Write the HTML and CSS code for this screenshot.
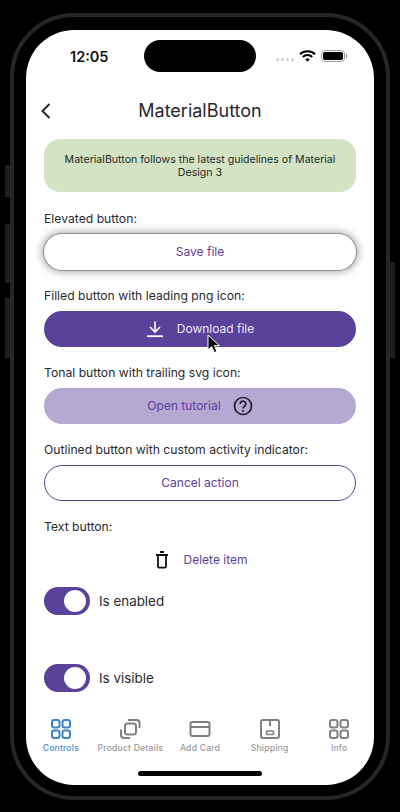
FILE: index.html
```html
<!DOCTYPE html>
<html lang="en">
<head>
    <meta charset="UTF-8">
    <meta name="viewport" content="width=device-width, initial-scale=1.0">
    <title>MaterialButton</title>
    <link rel="stylesheet" href="styles.css">
</head>
<body>
    <div class="phone">
        <span class="side-btn side-mute"></span>
        <span class="side-btn side-up"></span>
        <span class="side-btn side-down"></span>
        <span class="side-btn side-power"></span>
        <div class="screen">
            <div class="status">
                <span class="time">12:05</span>
                <span class="island"></span>
                <div class="status-icons">
                    <span class="signal"><i></i><i></i><i></i><i></i></span>
                    <svg class="wifi" width="17" height="12" viewBox="0 0 17 12">
                        <path d="M1 4.2a10.8 10.8 0 0 1 15 0" fill="none" stroke="#000" stroke-width="2"/>
                        <path d="M3.8 7a6.8 6.8 0 0 1 9.4 0" fill="none" stroke="#000" stroke-width="2"/>
                        <path d="M6.3 9.4a3.2 3.2 0 0 1 4.4 0L8.5 11.8z" fill="#000"/>
                    </svg>
                    <span class="battery"><span class="battery-fill"></span></span>
                </div>
            </div>
            <div class="nav">
                <svg class="back" width="12" height="18" viewBox="0 0 12 18">
                    <path d="M9.5 2 L2.5 9 L9.5 16" fill="none" stroke="#2a2a2e" stroke-width="2"/>
                </svg>
                <h1>MaterialButton</h1>
            </div>
            <div class="content">
                <p class="banner">MaterialButton follows the latest guidelines of Material Design 3</p>

                <p class="label">Elevated button:</p>
                <button class="btn btn-elevated">Save file</button>

                <p class="label">Filled button with leading png icon:</p>
                <button class="btn btn-filled">
                    <svg class="btn-icon" width="18" height="18" viewBox="0 0 18 18">
                        <path d="M9 1.5V11.5M4 7l5 5 5-5" fill="none" stroke="#fff" stroke-width="1.6"/>
                        <path d="M1 16.2h16" stroke="#fff" stroke-width="1.8"/>
                    </svg>
                    Download file
                    <svg class="cursor" width="14" height="20" viewBox="0 0 14 20">
                        <path d="M1 1V16L4.6 12.6L7.4 18.6L10 17.4L7.3 11.6H12.4Z" fill="#000" stroke="#fff" stroke-width="1"/>
                    </svg>
                </button>

                <p class="label">Tonal button with trailing svg icon:</p>
                <button class="btn btn-tonal">
                    Open tutorial
                    <svg class="btn-icon-end" width="20" height="20" viewBox="0 0 20 20">
                        <circle cx="10" cy="10" r="8.5" fill="none" stroke="#1f1f2b" stroke-width="1.7"/>
                        <path d="M7.2 8a2.8 2.8 0 1 1 4.3 2.3c-1 .7-1.5 1.1-1.5 2.2" fill="none" stroke="#1f1f2b" stroke-width="1.7"/>
                        <circle cx="10" cy="15" r="1.1" fill="#1f1f2b"/>
                    </svg>
                </button>

                <p class="label">Outlined button with custom activity indicator:</p>
                <button class="btn btn-outlined">Cancel action</button>

                <p class="label">Text button:</p>
                <button class="btn-text">
                    <svg width="12" height="18" viewBox="0 0 12 18">
                        <path d="M0 4h12M4 1h4" stroke="#111" stroke-width="1.8" fill="none"/>
                        <path d="M2 4.5V15.5a1.2 1.2 0 0 0 1.2 1.2h5.6a1.2 1.2 0 0 0 1.2-1.2V4.5" stroke="#111" stroke-width="1.8" fill="none"/>
                    </svg>
                    Delete item
                </button>

                <div class="switch-row">
                    <span class="switch"><span class="knob"></span></span>
                    <span>Is enabled</span>
                </div>
                <div class="switch-row switch-last">
                    <span class="switch"><span class="knob"></span></span>
                    <span>Is visible</span>
                </div>
            </div>
            <div class="tabs">
                <div class="tab active">
                    <svg width="22" height="22" viewBox="0 0 22 22" fill="none" stroke="currentColor" stroke-width="2">
                        <rect x="2" y="2" width="7.5" height="7.5" rx="2.2"/>
                        <rect x="12.5" y="2" width="7.5" height="7.5" rx="2.2"/>
                        <rect x="2" y="12.5" width="7.5" height="7.5" rx="2.2"/>
                        <rect x="12.5" y="12.5" width="7.5" height="7.5" rx="2.2"/>
                    </svg>
                    <span>Controls</span>
                </div>
                <div class="tab">
                    <svg width="22" height="22" viewBox="0 0 22 22" fill="none" stroke="currentColor" stroke-width="2">
                        <rect x="6" y="5.5" width="11" height="11" rx="2.5"/>
                        <path d="M9 2h8.5a3 3 0 0 1 3 3V10"/>
                        <path d="M2 11.5V17a3 3 0 0 0 3 3H11"/>
                    </svg>
                    <span>Product Details</span>
                </div>
                <div class="tab">
                    <svg width="22" height="22" viewBox="0 0 22 22" fill="none" stroke="currentColor" stroke-width="2">
                        <rect x="1.5" y="4" width="19" height="14" rx="2"/>
                        <path d="M1.5 9h19"/>
                    </svg>
                    <span>Add Card</span>
                </div>
                <div class="tab">
                    <svg width="22" height="22" viewBox="0 0 22 22" fill="none" stroke="currentColor" stroke-width="2">
                        <rect x="2" y="2" width="18" height="18" rx="2"/>
                        <path d="M11 2V8"/>
                        <rect x="7.5" y="13" width="7" height="3.5" rx=".8" stroke-width="1.6"/>
                    </svg>
                    <span>Shipping</span>
                </div>
                <div class="tab">
                    <svg width="22" height="22" viewBox="0 0 22 22" fill="none" stroke="currentColor" stroke-width="2">
                        <rect x="2" y="2" width="7.5" height="7.5" rx="2.2"/>
                        <rect x="12.5" y="2" width="7.5" height="7.5" rx="2.2"/>
                        <rect x="2" y="12.5" width="7.5" height="7.5" rx="2.2"/>
                        <rect x="12.5" y="12.5" width="7.5" height="7.5" rx="2.2"/>
                    </svg>
                    <span>Info</span>
                </div>
            </div>
            <div class="home-bar"><span></span></div>
        </div>
    </div>
</body>
</html>
```

FILE: styles.css
```css
* {
    box-sizing: border-box;
    margin: 0;
    padding: 0;
}
body {
    width: 400px;
    height: 812px;
    overflow: hidden;
    background: #000;
    padding: 13px 10px 0;
    font-family: Inter, "Liberation Sans", sans-serif;
    color: #2a2a2e;
}
.phone {
    position: relative;
    width: 380px;
    height: 787px;
    border: 4px solid #262626;
    border-radius: 64px;
    padding: 13px 12px 11px;
}
.side-btn {
    position: absolute;
    width: 5px;
    background: #1f1f1f;
}
.side-mute { left: -9px; top: 148px; height: 32px; }
.side-up { left: -9px; top: 207px; height: 59px; }
.side-down { left: -9px; top: 281px; height: 60px; }
.side-power { right: -9px; top: 245px; height: 96px; }
.screen {
    height: 100%;
    background: #fff;
    border-radius: 48px;
    overflow: hidden;
    display: flex;
    flex-direction: column;
}
.status {
    height: 52px;
    flex-shrink: 0;
    display: flex;
    align-items: center;
    padding: 10px 29px 10px 44px;
}
.time {
    width: 74px;
    font-size: 14.5px;
    font-weight: 600;
    color: #111;
}
.island {
    width: 112px;
    height: 32px;
    border-radius: 16px;
    background: #000;
}
.status-icons {
    display: flex;
    align-items: center;
    flex: 1;
    justify-content: flex-end;
    gap: 5px;
}
.signal {
    display: flex;
    gap: 2px;
    margin-top: 6px;
}
.signal i {
    width: 3px;
    height: 3px;
    border-radius: 50%;
    background: #d0d0d0;
}
.wifi {
    margin-top: -1px;
}
.battery {
    position: relative;
    width: 24px;
    height: 12px;
    border: 1px solid #9a9a9a;
    border-radius: 4px;
    padding: 1px;
    display: block;
}
.battery::after {
    content: "";
    position: absolute;
    right: -3px;
    top: 3px;
    width: 1px;
    height: 4px;
    background: #9a9a9a;
}
.battery-fill {
    display: block;
    height: 100%;
    background: #000;
    border-radius: 2px;
}
.nav {
    position: relative;
    height: 57px;
    flex-shrink: 0;
    display: flex;
    align-items: center;
    justify-content: center;
}
.back {
    position: absolute;
    left: 14px;
    top: 20px;
}
.nav h1 {
    font-size: 18px;
    font-weight: 400;
    color: #28282c;
}
.content {
    flex: 1;
    padding: 0 18px;
    font-size: 12.2px;
}
.banner {
    height: 53px;
    background: #d3e3c4;
    border-radius: 16px;
    padding: 15px 16px 0;
    text-align: center;
    font-size: 10.6px;
    line-height: 12.5px;
    color: #1e2b1e;
    margin-bottom: 18px;
}
.label {
    height: 17px;
    padding-top: 1px;
    line-height: 16px;
    margin-bottom: 7px;
}
.btn {
    position: relative;
    display: flex;
    align-items: center;
    justify-content: center;
    width: 100%;
    height: 36px;
    margin-bottom: 17px;
    padding-bottom: 1px;
    border: none;
    border-radius: 18px;
    font-family: inherit;
    font-size: 12px;
    color: #5a4199;
    background: #fff;
}
.btn-elevated {
    box-shadow: 0 0 1px 1px #8c8c8c, 0 0 7px 4px #c8c8c8;
}
.btn-filled {
    background: #5a4199;
    color: #ebe4f6;
}
.btn-icon {
    margin-right: 13px;
}
.cursor {
    position: absolute;
    left: 163px;
    top: 23px;
}
.btn-tonal {
    background: #b5a8d3;
}
.btn-icon-end {
    margin-left: 12px;
}
.btn-outlined {
    border: 1px solid #5a4199;
}
.btn-text {
    display: flex;
    align-items: center;
    justify-content: center;
    gap: 16px;
    width: 100%;
    height: 35px;
    padding-left: 3px;
    margin-bottom: 10px;
    border: none;
    background: none;
    font-family: inherit;
    font-size: 12px;
    color: #5a4199;
}
.switch-row {
    display: flex;
    align-items: center;
    gap: 9px;
    font-size: 13.4px;
    margin-bottom: 49px;
}
.switch-last {
    margin-bottom: 0;
}
.switch {
    width: 46px;
    height: 28px;
    border-radius: 14px;
    background: #5a4199;
    display: flex;
    align-items: center;
    justify-content: flex-end;
    padding-right: 4px;
}
.knob {
    width: 22px;
    height: 22px;
    border-radius: 50%;
    background: #fff;
}
.tabs {
    display: grid;
    grid-template-columns: repeat(5, 1fr);
    flex-shrink: 0;
    height: 47px;
}
.tab {
    display: flex;
    flex-direction: column;
    align-items: center;
    gap: 3px;
    font-size: 8.6px;
    font-weight: 500;
    letter-spacing: 0.2px;
    color: #808080;
    white-space: nowrap;
}
.tab span {
    color: #999;
}
.tab.active {
    color: #3d82c4;
}
.tab.active span {
    color: #4a8ccb;
}
.home-bar {
    height: 20px;
    flex-shrink: 0;
    display: flex;
    justify-content: center;
    padding-top: 6px;
}
.home-bar span {
    width: 124px;
    height: 5px;
    border-radius: 3px;
    background: #000;
}
```
